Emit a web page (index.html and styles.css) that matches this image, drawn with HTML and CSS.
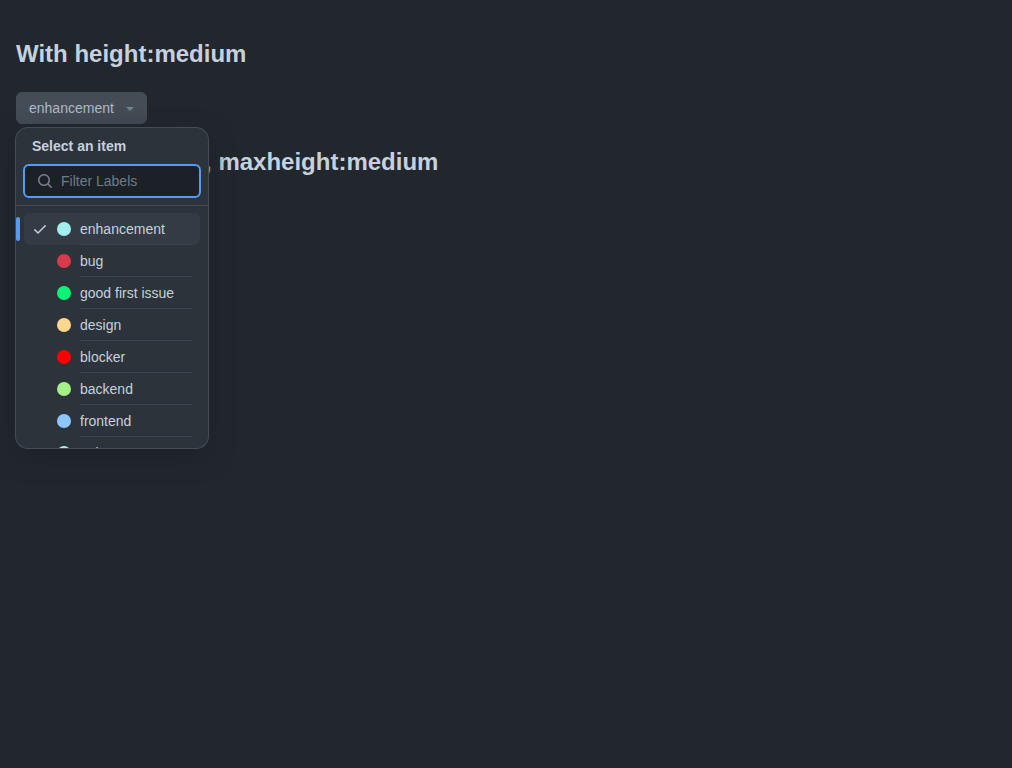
FILE: index.html
```
<!DOCTYPE html>
<html lang="en">
<head>
<meta charset="utf-8">
<title>SelectPanel height variants</title>
<link rel="stylesheet" href="styles.css">
</head>
<body>
<h2 class="heading">With height:medium</h2>
<div class="anchor">
  <button class="button" type="button">
    <span>enhancement</span>
    <svg class="button-caret" width="16" height="16" viewBox="0 0 16 16"><path d="m4.427 7.427 3.396 3.396a.25.25 0 0 0 .354 0l3.396-3.396A.25.25 0 0 0 11.396 7H4.604a.25.25 0 0 0-.177.427Z"/></svg>
  </button>
  <div class="overlay">
    <div class="overlay-title">Select an item</div>
    <div class="filter">
      <svg class="filter-icon" width="16" height="16" viewBox="0 0 16 16"><path d="M10.68 11.74a6 6 0 0 1-7.922-8.982 6 6 0 0 1 8.982 7.922l3.04 3.04a.749.749 0 0 1-.326 1.275.749.749 0 0 1-.734-.215ZM11.5 7a4.499 4.499 0 1 0-8.997 0A4.499 4.499 0 0 0 11.5 7Z"/></svg>
      <input class="filter-input" type="text" placeholder="Filter Labels">
    </div>
    <ul class="list">
      <li class="item item-selected">
        <svg class="check" width="16" height="16" viewBox="0 0 16 16"><path d="M13.78 4.22a.75.75 0 0 1 0 1.06l-7.25 7.25a.75.75 0 0 1-1.06 0L2.22 9.28a.751.751 0 0 1 .018-1.042.751.751 0 0 1 1.042-.018L6 10.94l6.72-6.72a.75.75 0 0 1 1.06 0Z"/></svg>
        <span class="dot dot-enhancement"></span><span class="label">enhancement</span>
      </li>
      <li class="item"><span class="check"></span><span class="dot dot-bug"></span><span class="label">bug</span></li>
      <li class="item"><span class="check"></span><span class="dot dot-first"></span><span class="label">good first issue</span></li>
      <li class="item"><span class="check"></span><span class="dot dot-design"></span><span class="label">design</span></li>
      <li class="item"><span class="check"></span><span class="dot dot-blocker"></span><span class="label">blocker</span></li>
      <li class="item"><span class="check"></span><span class="dot dot-backend"></span><span class="label">backend</span></li>
      <li class="item"><span class="check"></span><span class="dot dot-frontend"></span><span class="label">frontend</span></li>
      <li class="item"><span class="check"></span><span class="dot dot-enhancement"></span><span class="label">epic</span></li>
    </ul>
  </div>
</div>
<h2 class="heading">With height:auto, maxheight:medium</h2>
</body>
</html>
```
FILE: styles.css
```
* { box-sizing: border-box; }
body {
  min-height: 100vh;
  margin: 0;
  padding: 20px 16px;
  background: #22272e;
  color: #c5d1de;
  font-family: "Liberation Sans", Arial, sans-serif;
  font-size: 14px;
  line-height: 20px;
}
.heading {
  margin: 20px 0;
  font-size: 24px;
  line-height: 28px;
  font-weight: 700;
}
.anchor {
  position: relative;
  height: 32px;
  margin-top: 24px;
  margin-bottom: 24px;
}
.button {
  display: flex;
  align-items: center;
  gap: 8px;
  width: 131px;
  height: 32px;
  padding: 0 8px 0 12px;
  border: 1px solid #444c56;
  border-radius: 6px;
  background: #444c56;
  color: #adbac7;
  font: inherit;
}
.button-caret { fill: #768390; }
.overlay {
  position: absolute;
  top: 36px;
  left: 0;
  z-index: 1;
  display: flex;
  flex-direction: column;
  width: 192px;
  height: 320px;
  overflow: hidden;
  border-radius: 12px;
  background: #2d333b;
  box-shadow: 0 0 0 1px #444c56, 0 8px 24px rgba(28, 33, 40, 0.85);
}
.overlay-title {
  padding: 8px 16px 0;
  font-weight: 700;
}
.filter {
  display: flex;
  flex: none;
  align-items: center;
  gap: 8px;
  height: 34px;
  margin: 8px 7px 7px;
  padding: 0 8px 0 12px;
  border: 2px solid #539bf5;
  border-radius: 6px;
  background: #1c2128;
}
.filter-icon { flex: none; fill: #768390; }
.filter-input {
  min-width: 0;
  flex: 1;
  padding: 0;
  border: 0;
  outline: 0;
  background: none;
  color: inherit;
  font: inherit;
}
.filter-input::placeholder { color: #6e7a87; opacity: 1; }
.list {
  flex: 1;
  min-height: 0;
  margin: 0;
  padding: 7px 8px;
  overflow: hidden;
  border-top: 1px solid #444c56;
  list-style: none;
}
.item {
  position: relative;
  display: flex;
  align-items: center;
  height: 32px;
  padding: 0 8px;
  border-radius: 6px;
}
.item-selected { background: #353b44; }
.item-selected::before {
  content: "";
  position: absolute;
  top: 4px;
  left: -8px;
  width: 4px;
  height: 24px;
  border-radius: 2px;
  background: #539bf5;
}
.check { flex: none; width: 16px; height: 16px; fill: #c5d1de; }
.dot {
  flex: none;
  width: 14px;
  height: 14px;
  margin: 0 9px;
  border-radius: 50%;
}
.label {
  flex: 1;
  height: 32px;
  padding-top: 6px;
  border-bottom: 1px solid #3c434d;
}
.dot-enhancement { background: #a2eeef; }
.dot-bug { background: #d73a4a; }
.dot-first { background: #0cf478; }
.dot-design { background: #ffd78e; }
.dot-blocker { background: #ff0000; }
.dot-backend { background: #a4f287; }
.dot-frontend { background: #8dc6fc; }
```
